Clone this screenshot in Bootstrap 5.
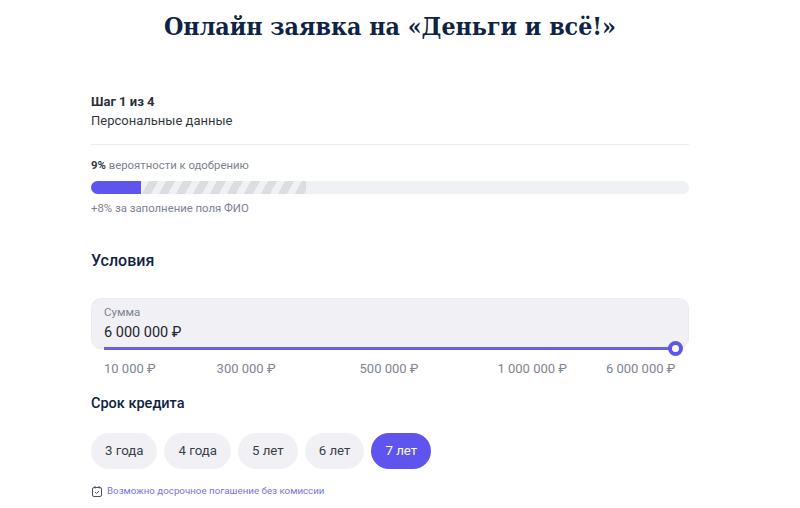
<!DOCTYPE html>
<html lang="ru">
<head>
    <meta charset="utf-8">
    <title>Онлайн заявка</title>
    <link href="https://cdn.jsdelivr.net/npm/bootstrap@5.3.2/dist/css/bootstrap.min.css" rel="stylesheet">
    <style>
        body { font-family: "Roboto", "Inter", sans-serif; color: #0f2344; background: #fff; overflow: hidden; }
        .page-wrap { width: 598px; margin-left: 91px; }
        .page-title { font-family: "DejaVu Serif", serif; font-stretch: condensed; font-weight: 700; font-size: 24.75px; line-height: 30px; color: #0f2344; text-align: center; margin: 12px 0 0 0; white-space: nowrap; }
        .step-no { font-size: 13px; font-weight: 700; line-height: 16px; color: #2a2f3a; margin-top: 52px; }
        .step-name { font-size: 13px; line-height: 18px; color: #33383f; margin-top: 2px; }
        .step-line { border-top: 1px solid #e9eaee; margin-top: 14px; }
        .chance { font-size: 11.35px; line-height: 14px; color: #7b8290; margin-top: 13px; }
        .chance b { color: #33383f; }
        .chance-track { height: 13px; border-radius: 7px; background: #f0f1f5; margin-top: 9px; overflow: hidden; display: flex; }
        .chance-fill { width: 50px; background: #5f54ee; }
        .chance-stripes { width: 165px; background: repeating-linear-gradient(118deg, #f0f1f5 0 7px, #dcdde1 7px 15px); }
        .chance-hint { font-size: 11.35px; line-height: 14px; color: #7b8290; margin-top: 7px; }
        .sec-title { font-size: 16px; font-weight: 500; line-height: 20px; color: #0f2344; margin-top: 36px; }
        .sum-box { height: 51px; background: #f1f1f5; border: 1px solid #ebebf0; border-radius: 10px; padding: 7px 12px 0; margin-top: 27px; }
        .sum-label { font-size: 11.5px; line-height: 13px; color: #7b8290; }
        .sum-value { font-size: 14.5px; line-height: 18px; color: #22262e; margin-top: 5px; }
        .slider-bar { height: 3px; background: #6a5fe0; margin: -2px 13px 0; position: relative; }
        .slider-knob { position: absolute; right: -7px; top: -6px; width: 15px; height: 15px; border-radius: 50%; background: #fff; border: 4px solid #5f54ee; }
        .ticks { display: flex; font-size: 13px; line-height: 16px; color: #80858f; margin: 11px 0 0 13px; white-space: nowrap; }
        .tick-1 { margin-left: 61px; }
        .tick-2 { margin-left: 84px; }
        .tick-3 { margin-left: 79px; }
        .tick-4 { margin-left: 39px; }
        .term-title { font-size: 14.5px; font-weight: 500; line-height: 18px; color: #0f2344; margin-top: 18px; }
        .term-btn { height: 36px; border-radius: 18px; background: #f1f1f5; border: 0; color: #3a4048; font-size: 13.25px; padding: 0 14px; }
        .term-btn.is-on { background: #5f54ee; color: #fff; }
        .term-row { gap: 7px; margin-top: 20px; }
        .term-note { gap: 5px; font-size: 9.75px; line-height: 14px; color: #7a72dc; margin: 15px 0 0 1px; }
    </style>
</head>
<body>
    <div class="page-wrap">
        <h1 class="page-title">Онлайн заявка на «Деньги и всё!»</h1>

        <div class="step-no">Шаг 1 из 4</div>
        <div class="step-name">Персональные данные</div>
        <div class="step-line"></div>

        <div class="chance"><b>9%</b> вероятности к одобрению</div>
        <div class="chance-track">
            <div class="chance-fill"></div>
            <div class="chance-stripes"></div>
        </div>
        <div class="chance-hint">+8% за заполнение поля ФИО</div>

        <div class="sec-title">Условия</div>
        <div class="sum-box">
            <div class="sum-label">Сумма</div>
            <div class="sum-value">6 000 000 ₽</div>
        </div>
        <div class="slider-bar"><span class="slider-knob"></span></div>
        <div class="ticks">
            <span>10 000 ₽</span>
            <span class="tick-1">300 000 ₽</span>
            <span class="tick-2">500 000 ₽</span>
            <span class="tick-3">1 000 000 ₽</span>
            <span class="tick-4">6 000 000 ₽</span>
        </div>

        <div class="term-title">Срок кредита</div>
        <div class="d-flex term-row">
            <button class="btn term-btn">3 года</button>
            <button class="btn term-btn">4 года</button>
            <button class="btn term-btn">5 лет</button>
            <button class="btn term-btn">6 лет</button>
            <button class="btn term-btn is-on">7 лет</button>
        </div>

        <div class="d-flex align-items-center term-note">
            <svg width="10" height="11" viewBox="0 0 10 11" fill="none" stroke="#4a5060" stroke-width="1">
                <rect x="0.5" y="1.5" width="9" height="9" rx="1.5"/>
                <path d="M3 0v2.5M7 0v2.5M3 6l1.5 1.5L7 5"/>
            </svg>
            <span>Возможно досрочное погашение без комиссии</span>
        </div>
    </div>
    <script src="https://cdn.jsdelivr.net/npm/bootstrap@5.3.2/dist/js/bootstrap.bundle.min.js"></script>
</body>
</html>
